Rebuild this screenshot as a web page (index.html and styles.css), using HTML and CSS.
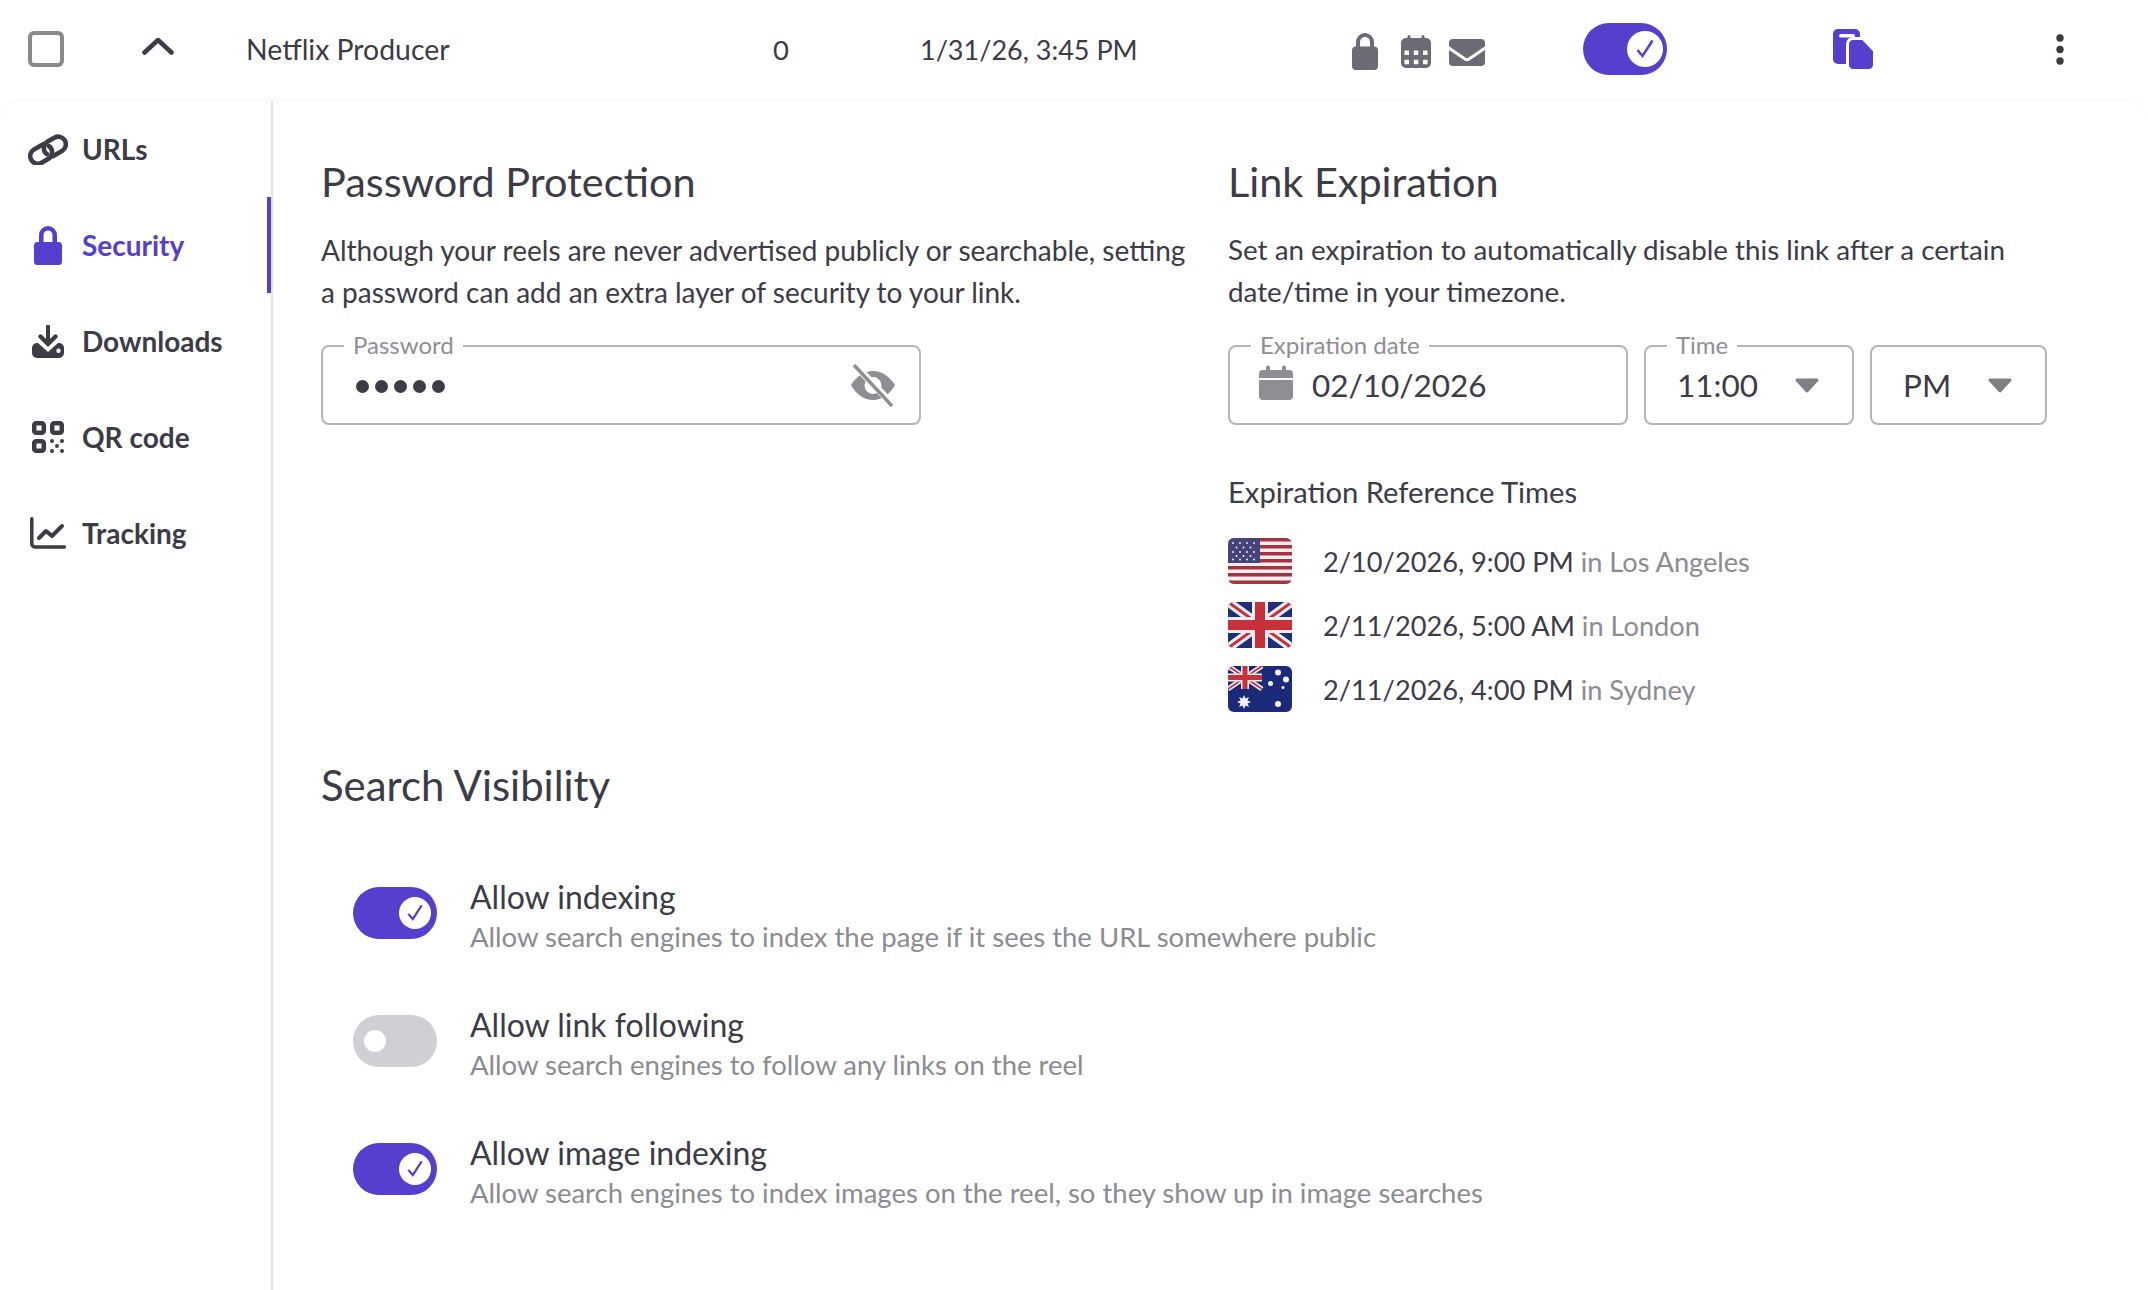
FILE: index.html
```html
<!DOCTYPE html>
<html>
	<head>
		<meta charset="utf-8">
		<title>Security</title>
		<link rel="stylesheet" href="styles.css">
	</head>
	<body>
		<header class="topo">
			<span class="caixa"></span>
			<svg class="seta" viewBox="0 0 32 18"><path d="M2.500 15.500 16 3l13.500 12.500" fill="none" stroke="#3c3b46" stroke-width="4.500" stroke-linecap="round" stroke-linejoin="round"/></svg>
			<span class="nome">Netflix Producer</span>
			<span class="contagem">0</span>
			<span class="data">1/31/26, 3:45 PM</span>
			<span class="icones">
				<svg class="ic-cadeado" viewBox="0 0 26 37"><path fill="#6b6a75" fill-rule="evenodd" d="M4 13.500V9a9 9 0 0 1 18 0v4.500h0a4 4 0 0 1 4 4V33a4 4 0 0 1-4 4H4a4 4 0 0 1-4-4V17.500a4 4 0 0 1 4-4zM8 13.500h10V9a5 5 0 0 0-10 0z"/></svg>
				<svg class="ic-agenda" viewBox="0 0 30 33"><path fill="#6b6a75" fill-rule="evenodd" d="M6.500 3V1.500a1.500 1.500 0 0 1 3 0V3h11V1.500a1.500 1.500 0 0 1 3 0V3H25a5 5 0 0 1 5 5v20a5 5 0 0 1-5 5H5a5 5 0 0 1-5-5V8a5 5 0 0 1 5-5zM3.500 15.500V20h4.500v-4.500zm9.300 0V20h4.500v-4.500zm9.200 0V20h4.500v-4.500zM3.500 24.700v4.500h4.500v-4.500zm9.300 0v4.500h4.500v-4.500zm9.200 0v4.500h4.500v-4.500z"/></svg>
				<svg class="ic-envelope" viewBox="0 0 36 27"><rect width="36" height="27" rx="4" fill="#6b6a75"/><path d="M-1 8.500l17 11.500a3.500 3.500 0 0 0 4 0L37 8.500" fill="none" stroke="#fff" stroke-width="3"/></svg>
			</span>
			<span class="chave ligada chave-topo"><span class="bolinha"><svg viewBox="0 0 36 36"><path d="M10.500 19l5 6L25.500 9.500" fill="none" stroke="#553fcc" stroke-width="2.500"/></svg></span></span>
			<svg class="ic-copia" viewBox="0 0 41 40"><rect width="27" height="35" rx="5" fill="#553fcc"/><rect x="6" y="5" width="16" height="3.500" rx="1.700" fill="#fff"/><path fill="#553fcc" stroke="#fff" stroke-width="3" d="M20 9.500h9a3 3 0 0 1 2 1l9 9.500a3 3 0 0 1 1.500 2.500V36a5.500 5.500 0 0 1-5.500 5.500H20a5.500 5.500 0 0 1-5.500-5.500V15a5.500 5.500 0 0 1 5.500-5.500z"/></svg>
			<svg class="ic-pontos" viewBox="0 0 8 31"><circle cx="4" cy="4" r="3.700" fill="#3c3b46"/><circle cx="4" cy="15.500" r="3.700" fill="#3c3b46"/><circle cx="4" cy="27" r="3.700" fill="#3c3b46"/></svg>
		</header>

		<div class="painel">
			<nav class="menu">
				<a class="item">
					<span class="item-icone"><svg width="40" height="32" viewBox="3 1.500 34 27"><g fill="none" stroke="#3c3b46" stroke-width="3.900" stroke-linecap="round" transform="rotate(-30 20 16)"><path d="M19 9.500H10a6.500 6.500 0 0 0 0 13H17a6.500 6.500 0 0 0 5.500-9"/><path d="M21 22.500H30a6.500 6.500 0 0 0 0-13H23a6.500 6.500 0 0 0-5.500 9"/></g></svg></span>
					URLs
				</a>
				<a class="item ativo">
					<span class="item-icone"><svg width="28" height="39" viewBox="0 0 28 39"><path fill="#553fcc" fill-rule="evenodd" d="M5 16V9a9 9 0 0 1 18 0v7h1.500a3.500 3.500 0 0 1 3.500 3.500v16a3.500 3.500 0 0 1-3.500 3.500h-21A3.500 3.500 0 0 1 0 35.500v-16A3.500 3.500 0 0 1 3.500 16zM9.500 16h9V9a4.500 4.500 0 0 0-9 0z"/></svg></span>
					Security
				</a>
				<a class="item">
					<span class="item-icone"><svg width="32" height="33" viewBox="0 0 32 33"><path fill="#3c3b46" d="M14 1.500a2 2 0 0 1 4 0V14l4-4a2 2 0 0 1 3 3l-9 9-9-9a2 2 0 0 1 3-3l4 4z"/><path fill="#3c3b46" fill-rule="evenodd" d="M6 18l10 9 10-9h1a5 5 0 0 1 5 5v5a5 5 0 0 1-5 5H5a5 5 0 0 1-5-5v-5a5 5 0 0 1 5-5zM26.500 23.500a2.200 2.200 0 1 0 0 4.400 2.200 2.200 0 0 0 0-4.400z"/></svg></span>
					Downloads
				</a>
				<a class="item">
					<span class="item-icone"><svg width="32" height="32" viewBox="0 0 32 32"><g fill="none" stroke="#3c3b46" stroke-width="4.500"><rect x="2.200" y="2.200" width="9.600" height="9.600" rx="2"/><rect x="20.200" y="2.200" width="9.600" height="9.600" rx="2"/><rect x="2.200" y="20.200" width="9.600" height="9.600" rx="2"/></g><g fill="#3c3b46"><circle cx="20" cy="20" r="2"/><circle cx="30" cy="20" r="2"/><circle cx="25" cy="25" r="2"/><circle cx="20" cy="30" r="2"/><circle cx="30" cy="30" r="2"/></g></svg></span>
					QR code
				</a>
				<a class="item">
					<span class="item-icone"><svg width="36" height="32" viewBox="0 0 36 32"><g fill="none" stroke="#3c3b46" stroke-linecap="round" stroke-linejoin="round"><path d="M1.800 1.800V27a3 3 0 0 0 3 3h29.500" stroke-width="3.500"/><path d="M9 21l7-7 6 5 10-10" stroke-width="4"/></g></svg></span>
					Tracking
				</a>
			</nav>

			<main class="conteudo">
				<div class="colunas">
					<section>
						<h2>Password Protection</h2>
						<p class="texto">Although your reels are never advertised publicly or searchable, setting a password can add an extra layer of security to your link.</p>
						<div class="campo campo-senha">
							<label>Password</label>
							<span class="pontinhos"><i></i><i></i><i></i><i></i><i></i></span>
							<svg class="ic-olho" viewBox="0 0 44 43"><path fill="#8f8e94" fill-rule="evenodd" d="M22 7c9 0 17 6 22 14-5 9-13 15-22 15S5 30 0 21C5 13 13 7 22 7zm0 6a8.500 8.500 0 1 0 0 17 8.500 8.500 0 0 0 0-17z"/><path d="M4 1l38 40" stroke="#fff" stroke-width="7"/><path d="M3 1l38 41" stroke="#8f8e94" stroke-width="3.500"/></svg>
						</div>
					</section>
					<section>
						<h2>Link Expiration</h2>
						<p class="texto texto-data">Set an expiration to automatically disable this link after a certain date/time in your timezone.</p>
						<div class="linha-campos">
							<div class="campo campo-data">
								<label>Expiration date</label>
								<svg class="ic-calendario" viewBox="0 0 34 35"><path fill="#8f8e94" d="M7 2.500a2 2 0 0 1 4 0V5h12V2.500a2 2 0 0 1 4 0V5h3a4 4 0 0 1 4 4v4H0V9a4 4 0 0 1 4-4h3zM0 15h34v16a4 4 0 0 1-4 4H4a4 4 0 0 1-4-4z"/></svg>
								<span class="valor">02/10/2026</span>
							</div>
							<div class="campo campo-hora">
								<label>Time</label>
								<span class="valor">11:00</span>
								<svg class="triangulo" viewBox="0 0 24 15"><path d="M2 2h20L12 13z" fill="#807f86" stroke="#807f86" stroke-width="3" stroke-linejoin="round"/></svg>
							</div>
							<div class="campo campo-periodo">
								<span class="valor">PM</span>
								<svg class="triangulo" viewBox="0 0 24 15"><path d="M2 2h20L12 13z" fill="#807f86" stroke="#807f86" stroke-width="3" stroke-linejoin="round"/></svg>
							</div>
						</div>
						<h3>Expiration Reference Times</h3>
						<ul class="cidades">
							<li>
								<svg class="bandeira" viewBox="0 0 64 46">
									<rect width="64" height="46" fill="#f0f0f2"/>
									<g fill="#a8333f">
										<rect width="64" height="3.500"/>
										<rect y="7" width="64" height="3.500"/>
										<rect y="14" width="64" height="3.500"/>
										<rect y="21" width="64" height="3.500"/>
										<rect y="28" width="64" height="3.500"/>
										<rect y="35" width="64" height="3.500"/>
										<rect y="42.500" width="64" height="3.500"/>
									</g>
									<rect width="32" height="25" fill="#44447a"/>
									<g fill="#e8e8ee">
										<circle cx="5" cy="5" r="1"/><circle cx="12" cy="5" r="1"/><circle cx="19" cy="5" r="1"/><circle cx="26" cy="5" r="1"/>
										<circle cx="8.500" cy="9.500" r="1"/><circle cx="15.500" cy="9.500" r="1"/><circle cx="22.500" cy="9.500" r="1"/>
										<circle cx="5" cy="14" r="1"/><circle cx="12" cy="14" r="1"/><circle cx="19" cy="14" r="1"/><circle cx="26" cy="14" r="1"/>
										<circle cx="8.500" cy="18" r="1"/><circle cx="15.500" cy="18" r="1"/><circle cx="22.500" cy="18" r="1"/>
										<circle cx="5" cy="21.500" r="1"/><circle cx="12" cy="21.500" r="1"/><circle cx="19" cy="21.500" r="1"/><circle cx="26" cy="21.500" r="1"/>
									</g>
								</svg>
								<span>2/10/2026, 9:00 PM <em>in Los Angeles</em></span>
							</li>
							<li>
								<svg class="bandeira" viewBox="0 0 64 46">
									<rect width="64" height="46" fill="#1f2f7a"/>
									<path d="M0 0l64 46M64 0L0 46" stroke="#efeff2" stroke-width="9"/>
									<path d="M0 0l32 23M64 46L32 23M64 0L32 23M0 46l32-23" stroke="#c8313a" stroke-width="3"/>
									<path d="M32 0v46M0 23h64" stroke="#efeff2" stroke-width="16"/>
									<path d="M32 0v46M0 23h64" stroke="#c8313a" stroke-width="10"/>
								</svg>
								<span>2/11/2026, 5:00 AM <em>in London</em></span>
							</li>
							<li>
								<svg class="bandeira" viewBox="0 0 64 46">
									<rect width="64" height="46" fill="#1a2a78"/>
									<path d="M0 0l34 23M34 0L0 23" stroke="#efeff2" stroke-width="5"/>
									<path d="M0 0l34 23M34 0L0 23" stroke="#c8313a" stroke-width="1.800"/>
									<path d="M17 0v23M0 11.500h34" stroke="#efeff2" stroke-width="8"/>
									<path d="M17 0v23M0 11.500h34" stroke="#c8313a" stroke-width="5"/>
									<g fill="#f2f2f5">
										<path d="M16 29l1.500 3.500 3.500-1.500-1.500 3.500L23 36l-3.500 1.500L21 41l-3.500-1.500L16 43l-1.500-3.500L11 41l1.500-3.500L9 36l3.500-1.500L11 31l3.500 1.500z"/>
										<circle cx="50" cy="6.500" r="3"/>
										<circle cx="42.500" cy="17.500" r="2.500"/>
										<circle cx="58" cy="13.500" r="3"/>
										<circle cx="55" cy="21.500" r="1.500"/>
										<circle cx="50" cy="38" r="3"/>
									</g>
								</svg>
								<span>2/11/2026, 4:00 PM <em>in Sydney</em></span>
							</li>
						</ul>
					</section>
				</div>

				<section class="busca">
					<h2>Search Visibility</h2>
					<div class="opcao">
						<span class="chave ligada"><span class="bolinha"><svg viewBox="0 0 36 36"><path d="M10.500 19l5 6L25.500 9.500" fill="none" stroke="#553fcc" stroke-width="2.500"/></svg></span></span>
						<div>
							<div class="opcao-titulo">Allow indexing</div>
							<div class="opcao-texto">Allow search engines to index the page if it sees the URL somewhere public</div>
						</div>
					</div>
					<div class="opcao">
						<span class="chave"><span class="bolinha"></span></span>
						<div>
							<div class="opcao-titulo">Allow link following</div>
							<div class="opcao-texto">Allow search engines to follow any links on the reel</div>
						</div>
					</div>
					<div class="opcao">
						<span class="chave ligada"><span class="bolinha"><svg viewBox="0 0 36 36"><path d="M10.500 19l5 6L25.500 9.500" fill="none" stroke="#553fcc" stroke-width="2.500"/></svg></span></span>
						<div>
							<div class="opcao-titulo">Allow image indexing</div>
							<div class="opcao-texto">Allow search engines to index images on the reel, so they show up in image searches</div>
						</div>
					</div>
				</section>
			</main>
		</div>
	</body>
</html>
```

FILE: styles.css
```css
* {
	box-sizing: border-box;
}

html, body {
	height: 100%;
}

body {
	margin: 0;
	overflow: hidden;
	background: #fff;
	color: #3c3b46;
	font-family: Lato, "Open Sans", sans-serif;
	font-size: 27.5px;
}

svg {
	display: block;
	flex: none;
}

/* linha de cima */
.topo {
	display: flex;
	align-items: center;
	height: 98px;
	padding-left: 28px;
}

.caixa {
	width: 36px;
	height: 36px;
	border: 4px solid #8a8a8e;
	border-radius: 6px;
	margin-right: 78px;
}

.seta {
	width: 32px;
	height: 18px;
	margin: -6px 72px 0 0;
}

.nome {
	width: 527px;
	font-size: 28.400px;
}

.contagem {
	width: 147px;
}

.data {
	width: 432px;
	font-size: 27px;
}

.icones {
	display: flex;
	align-items: center;
	gap: 23px;
	width: 231px;
}

.ic-cadeado {
	width: 26px;
	height: 37px;
	margin-top: 5px;
}

.ic-agenda {
	width: 30px;
	height: 33px;
	margin-top: 5px;
	margin-right: -4px;
}

.ic-envelope {
	width: 36px;
	height: 27px;
	margin: 7px -1px 0 -1px;
}

.chave-topo {
	margin-right: 166px;
}

.ic-copia {
	width: 41px;
	height: 40px;
	margin-right: 182px;
}

.ic-pontos {
	width: 8px;
	height: 31px;
}

/* interruptor */
.chave {
	display: flex;
	align-items: center;
	flex: none;
	width: 84px;
	height: 52px;
	border-radius: 26px;
	background: #d0d0d4;
	padding-left: 11px;
}

.chave .bolinha {
	width: 22px;
	height: 22px;
	border-radius: 50%;
	background: #fff;
}

.chave.ligada {
	justify-content: flex-end;
	background: #553fcc;
	padding: 0 6px 0 0;
}

.chave.ligada .bolinha {
	width: 32px;
	height: 32px;
}

.chave-topo.ligada {
	padding-right: 4px;
}

.chave-topo.ligada .bolinha {
	width: 36px;
	height: 36px;
}

/* painel */
.painel {
	display: flex;
	height: 1192px;
	margin-top: 2px;
	border-top: 1px solid #f6f6f7;
	border-radius: 20px 20px 0 0;
}

.menu {
	flex: none;
	width: 273px;
	border-right: 2px solid #e4e4e6;
}

.item {
	display: flex;
	align-items: center;
	height: 96px;
	font-size: 28px;
	font-weight: 700;
}

.item-icone {
	display: flex;
	justify-content: center;
	width: 48px;
	margin: 0 10px 0 24px;
}

.ativo {
	color: #553fcc;
	border-right: 4px solid #553fcc;
}

.conteudo {
	flex: 1;
	padding: 56px 0 0 48px;
}

.colunas {
	display: grid;
	grid-template-columns: 907px 1fr;
}

h2 {
	margin: 0;
	font-size: 41.400px;
	font-weight: 400;
	line-height: 48px;
}

.texto {
	max-width: 880px;
	margin: 24px 0 0;
	font-size: 28px;
	line-height: 42px;
}

.texto-data {
	font-size: 27.800px;
}

h3 {
	margin: 49px 0 0;
	font-size: 29.200px;
	font-weight: 400;
	line-height: 36px;
}

/* campos */
.campo {
	position: relative;
	display: flex;
	align-items: center;
	height: 80px;
	border: 2px solid #b5b5b8;
	border-radius: 8px;
}

.campo label {
	position: absolute;
	left: 21px;
	top: -15px;
	padding: 0 9px;
	background: #fff;
	color: #8f8e94;
	font-size: 24px;
	line-height: 26px;
}

.campo-senha {
	justify-content: space-between;
	width: 600px;
	margin-top: 32px;
	padding: 0 24px 0 33px;
}

.pontinhos {
	display: flex;
	gap: 6px;
	margin-top: 2px;
}

.pontinhos i {
	width: 13px;
	height: 13px;
	border-radius: 50%;
	background: #3c3b46;
}

.ic-olho {
	width: 44px;
	height: 43px;
}

.linha-campos {
	display: flex;
	gap: 16px;
	margin-top: 32px;
}

.valor {
	font-size: 31.500px;
}

.campo-data {
	width: 400px;
	padding-left: 29px;
}

.ic-calendario {
	width: 34px;
	height: 35px;
	margin: -6px 19px 0 0;
}

.campo-hora {
	justify-content: space-between;
	width: 210px;
	padding: 0 33px 0 31px;
}

.campo-periodo {
	justify-content: space-between;
	width: 177px;
	padding: 0 33px 0 31px;
}

.triangulo {
	width: 24px;
	height: 15px;
}

/* horas de referência */
.cidades {
	list-style: none;
	margin: 19px 0 0;
	padding: 0;
	font-size: 27.200px;
}

.cidades li {
	display: flex;
	align-items: center;
	gap: 31px;
	height: 64px;
}

.bandeira {
	width: 64px;
	height: 46px;
	border-radius: 6px;
}

em {
	font-style: normal;
	color: #8b8b92;
}

/* busca */
.busca {
	margin-top: 40px;
}

.opcao {
	display: flex;
	align-items: center;
	gap: 33px;
	height: 128px;
	padding-left: 32px;
}

.opcao .chave {
	margin-top: -8px;
}

.busca h2 {
	font-size: 41.900px;
}

.busca h2 + .opcao {
	margin-top: 44px;
}

.opcao-titulo {
	font-size: 32px;
	line-height: 40px;
}

.opcao-texto {
	color: #8b8b92;
	line-height: 40px;
}
```
